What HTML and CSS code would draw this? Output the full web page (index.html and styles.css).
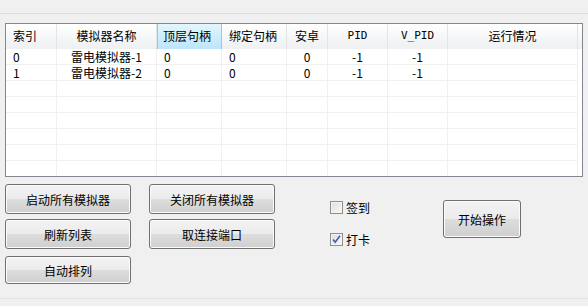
FILE: index.html
```html
<!DOCTYPE html>
<html lang="zh-CN">
<head>
    <meta charset="UTF-8">
    <title>雷电模拟器管理</title>
    <link rel="stylesheet" href="styles.css">
</head>
<body>
    <div class="topbar"></div>

    <div class="list">
        <div class="row head">
            <div class="cell left">索引</div>
            <div class="cell">模拟器名称</div>
            <div class="cell left hot">顶层句柄</div>
            <div class="cell left">绑定句柄</div>
            <div class="cell">安卓</div>
            <div class="cell mono">PID</div>
            <div class="cell mono">V_PID</div>
            <div class="cell">运行情况</div>
        </div>
        <div class="row">
            <div class="cell left">0</div>
            <div class="cell">雷电模拟器-1</div>
            <div class="cell left">0</div>
            <div class="cell left">0</div>
            <div class="cell">0</div>
            <div class="cell">-1</div>
            <div class="cell">-1</div>
            <div class="cell"></div>
        </div>
        <div class="row">
            <div class="cell left">1</div>
            <div class="cell">雷电模拟器-2</div>
            <div class="cell left">0</div>
            <div class="cell left">0</div>
            <div class="cell">0</div>
            <div class="cell">-1</div>
            <div class="cell">-1</div>
            <div class="cell"></div>
        </div>
        <div class="row"><div class="cell"></div><div class="cell"></div><div class="cell"></div><div class="cell"></div><div class="cell"></div><div class="cell"></div><div class="cell"></div><div class="cell"></div></div>
        <div class="row"><div class="cell"></div><div class="cell"></div><div class="cell"></div><div class="cell"></div><div class="cell"></div><div class="cell"></div><div class="cell"></div><div class="cell"></div></div>
        <div class="row"><div class="cell"></div><div class="cell"></div><div class="cell"></div><div class="cell"></div><div class="cell"></div><div class="cell"></div><div class="cell"></div><div class="cell"></div></div>
        <div class="row"><div class="cell"></div><div class="cell"></div><div class="cell"></div><div class="cell"></div><div class="cell"></div><div class="cell"></div><div class="cell"></div><div class="cell"></div></div>
        <div class="row"><div class="cell"></div><div class="cell"></div><div class="cell"></div><div class="cell"></div><div class="cell"></div><div class="cell"></div><div class="cell"></div><div class="cell"></div></div>
        <div class="row"><div class="cell"></div><div class="cell"></div><div class="cell"></div><div class="cell"></div><div class="cell"></div><div class="cell"></div><div class="cell"></div><div class="cell"></div></div>
    </div>

    <div class="controls">
        <div class="btn-grid">
            <button class="btn">启动所有模拟器</button>
            <button class="btn">关闭所有模拟器</button>
            <button class="btn">刷新列表</button>
            <button class="btn">取连接端口</button>
            <button class="btn last">自动排列</button>
        </div>
        <div class="checks">
            <label class="check"><span class="box"></span>签到</label>
            <label class="check"><span class="box checked"><svg width="11" height="11" viewBox="0 0 11 11"><path d="M2 5.5 L4.2 8.2 L9 1.8" fill="none" stroke="#4660b0" stroke-width="1.7"/></svg></span>打卡</label>
        </div>
        <button class="btn start">开始操作</button>
    </div>

    <div class="footer"></div>
</body>
</html>
```

FILE: styles.css
```css
body {
    margin: 0;
    padding: 0;
    font-family: "Noto Sans CJK SC", "Liberation Sans", sans-serif;
    font-size: 12px;
    color: #000;
    background-color: #f0f0f0;
    height: 100vh;
    overflow: hidden;
}
.topbar {
    height: 13px;
    border-bottom: 1px solid #d9dee4;
}
.list {
    margin: 9px 5px 0 5px;
    height: 152px;
    border: 1px solid #828790;
    background: #ffffff;
    overflow: hidden;
}
.row {
    display: grid;
    grid-template-columns: 51px 100px 65px 65px 41px 60px 60px 130px;
    height: 16px;
}
.row.head {
    height: 25px;
    background: linear-gradient(#ffffff, #f6f7f8 50%, #eef0f2);
}
.cell {
    box-sizing: border-box;
    border-right: 1px solid #f0f0f0;
    border-bottom: 1px solid #f0f0f0;
    line-height: 15px;
    text-align: center;
    white-space: nowrap;
    overflow: hidden;
}
.cell.left {
    text-align: left;
    padding-left: 7px;
}
.head .cell {
    line-height: 24px;
    border-right-color: #e3e4e6;
    border-bottom: none;
}
.head .cell.hot {
    background: linear-gradient(#e5f6fd, #cdeefd 50%, #bde5fb);
    border-right-color: #8ecbe8;
    box-shadow: inset 1px 0 #8ecbe8;
    padding-left: 6px;
}
.head .mono {
    font-family: "DejaVu Sans Mono", monospace;
    font-size: 11px;
}
.controls {
    display: flex;
    align-items: flex-start;
    margin-top: 7px;
    padding-left: 5px;
    height: 102px;
}
.btn-grid {
    display: grid;
    grid-template-columns: 126px 126px;
    grid-auto-rows: 30px;
    column-gap: 18px;
    row-gap: 5px;
}
.btn {
    font-family: inherit;
    font-size: 12px;
    color: #000;
    margin: 0;
    padding: 0;
    border: 1px solid #707070;
    border-radius: 3px;
    background: linear-gradient(#f3f3f3, #ebebeb 50%, #dddddd 50%, #cfcfcf);
    box-shadow: inset 0 0 0 1px #fbfbfb;
}
.btn.last {
    margin-top: 2px;
}
.checks {
    display: flex;
    flex-direction: column;
    gap: 18px;
    width: 113px;
    margin-left: 55px;
    padding-top: 16px;
}
.check {
    display: flex;
    align-items: center;
    height: 14px;
    gap: 3px;
}
.box {
    box-sizing: border-box;
    width: 13px;
    height: 13px;
    border: 1px solid #8e8f8f;
    background: linear-gradient(135deg, #dcdcdc, #fafafa);
    box-shadow: inset 0 0 0 1px #f4f4f4;
    display: flex;
    align-items: center;
    justify-content: center;
}
.box svg {
    display: block;
}
.btn.start {
    width: 78px;
    height: 38px;
    margin-top: 16px;
}
.footer {
    margin-top: 12px;
    border-top: 1px solid #dfe3e8;
}
```
